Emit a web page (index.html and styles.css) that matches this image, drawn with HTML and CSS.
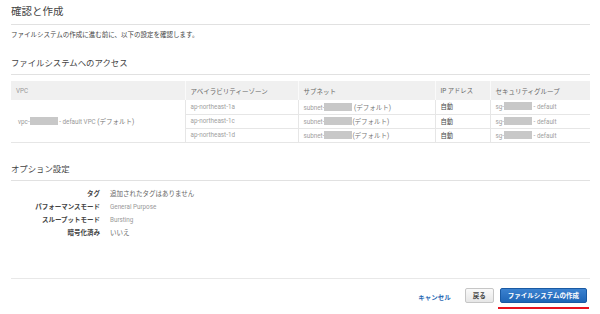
FILE: index.html
```html
<!DOCTYPE html>
<html lang="ja">
<head>
    <meta charset="UTF-8">
    <meta name="viewport" content="width=device-width, initial-scale=1.0">
    <title>確認と作成</title>
    <link rel="stylesheet" href="styles.css">
</head>
<body>
    <div class="page">
        <h1 class="page-title">確認と作成</h1>
        <p class="intro">ファイルシステムの作成に進む前に、以下の設定を確認します。</p>

        <h2 class="section-title">ファイルシステムへのアクセス</h2>
        <table class="access-table">
            <thead>
                <tr>
                    <th class="col-vpc">VPC</th>
                    <th class="col-az">アベイラビリティーゾーン</th>
                    <th class="col-subnet">サブネット</th>
                    <th class="col-ip">IP アドレス</th>
                    <th class="col-sg">セキュリティグループ</th>
                </tr>
            </thead>
            <tbody>
                <tr>
                    <td rowspan="3" class="vpc-cell">vpc-<span class="mask"></span> - default VPC <span class="jp">(デフォルト)</span></td>
                    <td>ap-northeast-1a</td>
                    <td>subnet-<span class="mask"></span> <span class="jp">(デフォルト)</span></td>
                    <td class="ip">自動</td>
                    <td>sg-<span class="mask"></span> - default</td>
                </tr>
                <tr>
                    <td>ap-northeast-1c</td>
                    <td>subnet-<span class="mask"></span><span class="jp">(デフォルト)</span></td>
                    <td class="ip">自動</td>
                    <td>sg-<span class="mask"></span> - default</td>
                </tr>
                <tr>
                    <td>ap-northeast-1d</td>
                    <td>subnet-<span class="mask"></span><span class="jp">(デフォルト)</span></td>
                    <td class="ip">自動</td>
                    <td>sg-<span class="mask"></span> - default</td>
                </tr>
            </tbody>
        </table>

        <h2 class="section-title options-title">オプション設定</h2>
        <dl class="options">
            <dt>タグ</dt>
            <dd class="jp-value">追加されたタグはありません</dd>
            <dt>パフォーマンスモード</dt>
            <dd>General Purpose</dd>
            <dt>スループットモード</dt>
            <dd>Bursting</dd>
            <dt>暗号化済み</dt>
            <dd class="jp-value">いいえ</dd>
        </dl>

        <!-- Footer actions -->
        <div class="actions">
            <a class="cancel" href="#">キャンセル</a>
            <button class="btn btn-back">戻る</button>
            <span class="highlight">
                <button class="btn btn-create">ファイルシステムの作成</button>
            </span>
        </div>
    </div>
</body>
</html>
```

FILE: styles.css
```css
/* General Reset */
* {
    margin: 0;
    padding: 0;
    box-sizing: border-box;
}
body {
    font-family: Roboto, "Noto Sans CJK JP", sans-serif;
    color: #444;
    background: #fff;
}
.page {
    padding: 4px 10px 0 11px;
}
.page-title {
    font-size: 10.5px;
    font-weight: normal;
    color: #444;
    line-height: 16px;
    padding-bottom: 4px;
    border-bottom: 1px solid #e1e1e1;
}
.intro {
    font-size: 6.5px;
    color: #444;
    margin-top: 5px;
    line-height: 10px;
}
.section-title {
    font-size: 8.4px;
    font-weight: normal;
    color: #444;
    margin-top: 17px;
    line-height: 12px;
    padding-bottom: 5px;
    border-bottom: 1px solid #e1e1e1;
}
.access-table {
    width: 579px;
    margin-top: 6px;
    border-collapse: collapse;
    font-size: 6.3px;
    color: #a0a0a0;
}
.access-table th {
    background: #f0f0f0;
    font-weight: normal;
    font-size: 6.5px;
    color: #666;
    text-align: left;
    height: 19px;
    padding: 0 5px;
    border-left: 1px solid #fafafa;
}
.access-table th.col-vpc {
    color: #999;
    font-size: 6.3px;
    border-left: none;
}
.access-table th.col-ip {
    font-size: 6.3px;
}
.col-vpc { width: 174px; }
.col-az { width: 113px; }
.col-subnet { width: 137px; }
.col-ip { width: 55px; }
.access-table td {
    height: 14px;
    padding: 0 5px;
    border-bottom: 1px solid #e6e6e6;
    border-left: 1px solid #e6e6e6;
    white-space: nowrap;
}
.access-table td.vpc-cell {
    border-left: none;
    padding-left: 7px;
    color: #999;
}
.access-table td.ip {
    color: #444;
    font-size: 6.3px;
}
.jp {
    font-size: 6.5px;
    color: #777;
}
.mask {
    display: inline-block;
    width: 28px;
    height: 8px;
    background: #c8c8c8;
    vertical-align: -1px;
}
.options-title {
    margin-top: 20px;
}
.options {
    display: grid;
    grid-template-columns: 89px 1fr;
    column-gap: 10px;
    row-gap: 4px;
    margin-top: 9px;
    line-height: 9px;
}
.options dt {
    text-align: right;
    font-size: 6.5px;
    font-weight: bold;
    color: #444;
}
.options dd {
    font-size: 6.3px;
    color: #999;
}
.options dd.jp-value {
    font-size: 6.5px;
    color: #666;
}
.actions {
    margin-top: 40px;
    border-top: 1px solid #e8e8e8;
    display: flex;
    justify-content: flex-end;
    align-items: flex-start;
    padding: 9px 1px 0 0;
}
.cancel {
    font-size: 6.5px;
    font-weight: bold;
    color: #2d6bb5;
    text-decoration: none;
    margin: 4px 14px 0 0;
}
.btn {
    font-family: inherit;
    font-size: 6.5px;
    font-weight: bold;
    height: 15px;
    border-radius: 2px;
    cursor: pointer;
    white-space: nowrap;
}
.btn-back {
    color: #444;
    background: linear-gradient(#fafafa, #e6e6e6);
    border: 1px solid #c6c6c6;
    padding: 0 7px;
    margin-right: 4px;
}
.highlight {
    display: block;
    padding: 0 2px 4px;
    border-bottom: 2px solid #e8121e;
}
.btn-create {
    display: block;
    color: #fff;
    background: linear-gradient(#3b82d0, #1f66b7);
    border: 1px solid #1a5aa3;
    padding: 0 7px;
}
```
